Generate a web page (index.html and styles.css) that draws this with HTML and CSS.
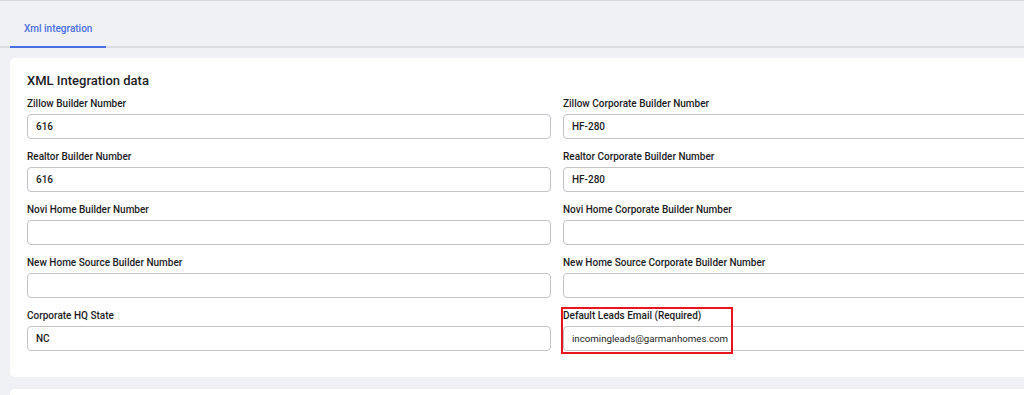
FILE: index.html
```html
<!DOCTYPE html>
<html lang="en">
<head>
    <meta charset="UTF-8">
    <meta name="viewport" content="width=device-width, initial-scale=1.0">
    <title>Xml integration</title>
    <link rel="stylesheet" href="styles.css">
</head>
<body>
    <div class="tabs">
        <div class="tab active">Xml integration</div>
    </div>

    <div class="card">
        <h3>XML Integration data</h3>
        <form class="fields" onsubmit="return false;">
            <div class="field">
                <label for="zillow">Zillow Builder Number</label>
                <input type="text" id="zillow" value="616">
            </div>
            <div class="field">
                <label for="zillow_corp">Zillow Corporate Builder Number</label>
                <input type="text" id="zillow_corp" value="HF-280">
            </div>
            <div class="field">
                <label for="realtor">Realtor Builder Number</label>
                <input type="text" id="realtor" value="616">
            </div>
            <div class="field">
                <label for="realtor_corp">Realtor Corporate Builder Number</label>
                <input type="text" id="realtor_corp" value="HF-280">
            </div>
            <div class="field">
                <label for="novi">Novi Home Builder Number</label>
                <input type="text" id="novi" value="">
            </div>
            <div class="field">
                <label for="novi_corp">Novi Home Corporate Builder Number</label>
                <input type="text" id="novi_corp" value="">
            </div>
            <div class="field">
                <label for="nhs">New Home Source Builder Number</label>
                <input type="text" id="nhs" value="">
            </div>
            <div class="field">
                <label for="nhs_corp">New Home Source Corporate Builder Number</label>
                <input type="text" id="nhs_corp" value="">
            </div>
            <div class="field">
                <label for="hq_state">Corporate HQ State</label>
                <input type="text" id="hq_state" value="NC">
            </div>
            <div class="field">
                <label for="leads_email">Default Leads Email (Required)</label>
                <input type="text" id="leads_email" class="email" value="incomingleads@garmanhomes.com">
                <div class="highlight"></div>
            </div>
        </form>
    </div>

    <div class="card next"></div>
</body>
</html>
```

FILE: styles.css
```css
body {
    margin: 0;
    background-color: #f0f1f5;
    border-top: 1px solid #d7d8dd;
    font-family: Roboto, "Liberation Sans", Arial, sans-serif;
    color: #1d1d1f;
    overflow: hidden;
}
.tabs {
    display: flex;
    height: 45px;
    padding-left: 10px;
    border-bottom: 2px solid #dcdde2;
}
.tab {
    padding: 22px 14px 0;
    font-size: 10px;
    line-height: 12px;
    font-weight: 500;
    color: #4a6fe3;
    margin-bottom: -2px;
    border-bottom: 2px solid #4a6fe3;
}
.card {
    width: 1094px;
    margin: 10px 0 0 10px;
    padding: 15px 17px 26px;
    box-sizing: border-box;
    background-color: #fff;
    border-radius: 5px;
}
.card.next {
    margin-top: 12px;
    height: 60px;
}
h3 {
    margin: 0 0 9px;
    font-size: 13px;
    line-height: 16px;
    font-weight: 500;
}
.fields {
    display: grid;
    grid-template-columns: 1fr 1fr;
    column-gap: 12px;
    row-gap: 12px;
}
.field {
    position: relative;
    display: flex;
    flex-direction: column;
    gap: 4px;
}
label {
    font-size: 10px;
    line-height: 12px;
    font-weight: 500;
}
input[type="text"] {
    height: 25px;
    padding: 0 8px;
    box-sizing: border-box;
    border: 1px solid #c3c4c8;
    border-radius: 4px;
    font-family: Roboto, "Liberation Sans", Arial, sans-serif;
    font-size: 10px;
    font-weight: 500;
    color: #1d1d1f;
    background-color: #fff;
}
input.email {
    font-weight: 400;
    font-size: 9.7px;
}
.highlight {
    position: absolute;
    left: -2px;
    top: -3px;
    width: 172px;
    height: 47px;
    border: 2px solid #e8141e;
    box-sizing: border-box;
}
```
